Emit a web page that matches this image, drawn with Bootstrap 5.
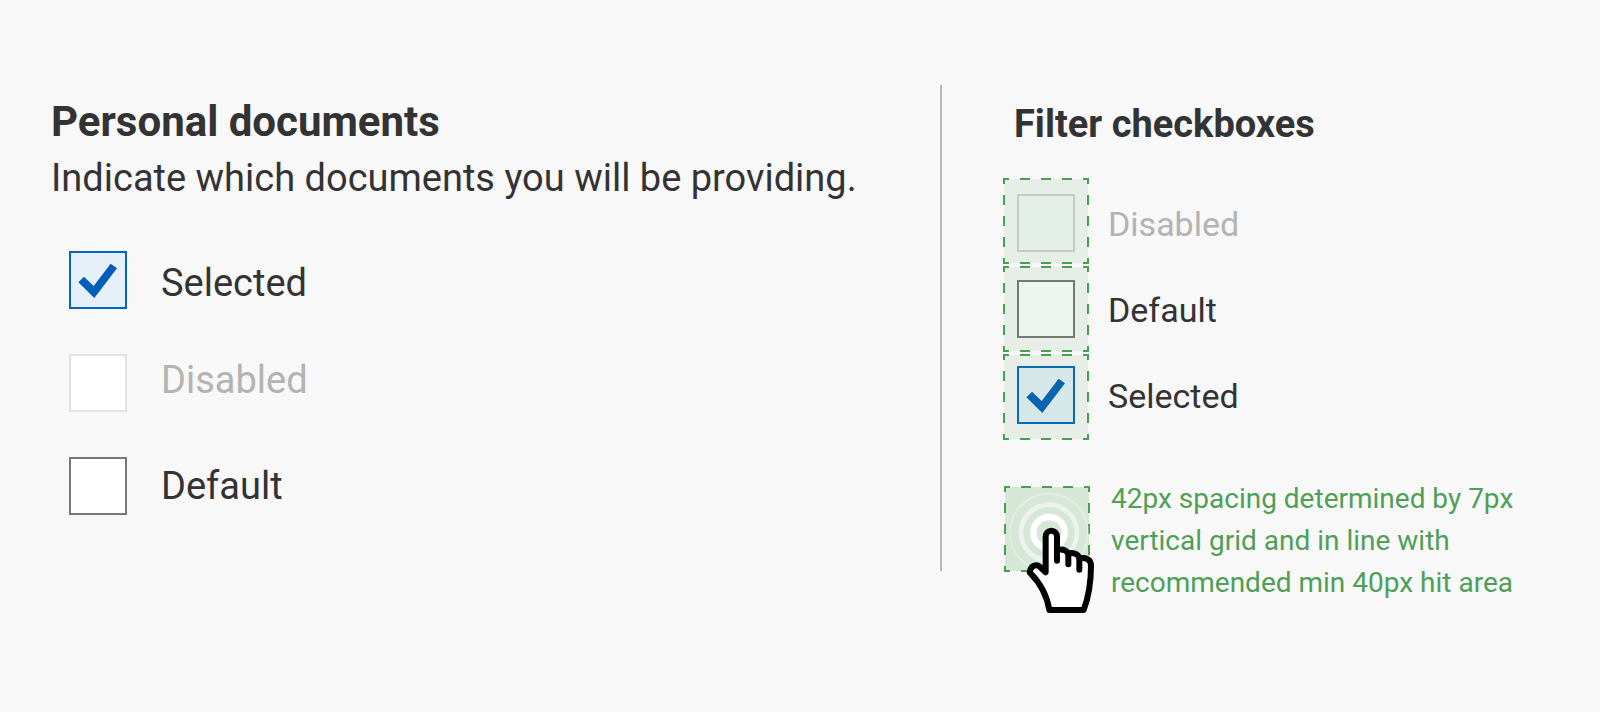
<!DOCTYPE html>
<html lang="en">
<head>
<meta charset="utf-8">
<meta name="viewport" content="width=device-width, initial-scale=1">
<title>Checkboxes</title>
<link href="https://cdn.jsdelivr.net/npm/bootstrap@5.3.0/dist/css/bootstrap.min.css" rel="stylesheet">
<style>
  body { background: #f8f8f8; color: #333; font-family: Roboto, sans-serif; }
  .spec { padding-top: 85px; }
  .documents { flex: 0 0 58.75%; padding: 10px 0 0 51px; }
  .divider { flex: 0 0 2px; background: #b7b7b7; margin-bottom: 49px; }
  .filters { padding: 12px 0 16px 61px; }

  .documents h1 { font-size: 42px; line-height: 54px; }
  .intro { font-size: 38px; line-height: 58px; }
  .filters h2 { font-size: 38px; line-height: 54px; padding-left: 11px; }

  .choice { gap: 34px; }
  .choice label { font-size: 38px; line-height: 52px; }
  .document-list { gap: 45px; padding: 44px 0 0 18px; }

  .choice .form-check-input {
    flex: none; width: 58px; height: 58px; margin: 0;
    border: 2px solid #777; border-radius: 0; background-color: #fff;
    background-size: 58px 58px; background-origin: border-box; opacity: 1;
  }
  .choice .form-check-input:checked {
    border-color: #0067c0; background-color: #e6f0f9;
    background-image: url("data:image/svg+xml,%3Csvg xmlns='http://www.w3.org/2000/svg' viewBox='0 0 174 174'%3E%3Cpath fill='%23005eb8' d='M28 94 45 77 74 105 125 38 144 52 76 141z'/%3E%3C/svg%3E");
  }
  .choice .form-check-input:disabled { border-color: #e2e2e2; }
  .choice .form-check-input:disabled ~ label { color: #b3b3b3; opacity: 1; }

  .filter-list { margin-top: 29px; padding-left: 14px; }
  .filter-list .choice { height: 86px; gap: 33px; }
  .filter-list .choice label { font-size: 34px; line-height: 46px; padding-top: 1px; }
  .filter-list .form-check-input:disabled { border-color: #d1d1d1; background-color: #f7f9fb; }

  .hit-areas { top: -2px; left: 0; gap: 2px; }
  .hit-area { display: block; flex: none; width: 86px; height: 86px; overflow: visible; }

  .hint { margin-top: 40px; padding-left: 1px; gap: 21px; color: #4f9f57; }
  .hint .hit-area { margin-top: 8px; }
  .hint p { font-size: 28px; line-height: 42px; }
</style>
</head>
<body class="min-vh-100">
<svg class="d-none" aria-hidden="true">
  <symbol id="dashed-square" viewBox="0 0 86 86">
    <rect x="1" y="1" width="84" height="84" stroke="#4c9d54" stroke-width="2" stroke-dasharray="10 11" stroke-dashoffset="5"/>
  </symbol>
</svg>

<main class="spec d-flex">
  <section class="documents">
    <h1 class="fw-bold mb-0">Personal documents</h1>
    <p class="intro mb-0">Indicate which documents you will be providing.</p>
    <div class="document-list d-flex flex-column">
      <div class="choice d-flex align-items-end">
        <input class="form-check-input" type="checkbox" id="doc-selected" checked>
        <label for="doc-selected">Selected</label>
      </div>
      <div class="choice d-flex align-items-start">
        <input class="form-check-input" type="checkbox" id="doc-disabled" disabled>
        <label for="doc-disabled">Disabled</label>
      </div>
      <div class="choice d-flex align-items-center">
        <input class="form-check-input" type="checkbox" id="doc-default">
        <label for="doc-default">Default</label>
      </div>
    </div>
  </section>

  <div class="divider"></div>

  <section class="filters flex-grow-1">
    <h2 class="fw-bold mb-0">Filter checkboxes</h2>
    <div class="filter-list position-relative">
      <div class="choice d-flex align-items-center">
        <input class="form-check-input" type="checkbox" id="filter-disabled" disabled>
        <label for="filter-disabled">Disabled</label>
      </div>
      <div class="choice d-flex align-items-center">
        <input class="form-check-input" type="checkbox" id="filter-default">
        <label for="filter-default">Default</label>
      </div>
      <div class="choice d-flex align-items-center">
        <input class="form-check-input" type="checkbox" id="filter-selected" checked>
        <label for="filter-selected">Selected</label>
      </div>
      <!-- touch targets laid over the three boxes -->
      <div class="hit-areas position-absolute d-flex flex-column pe-none" aria-hidden="true">
        <svg class="hit-area" fill="rgba(76,157,84,.1)"><use href="#dashed-square"/></svg>
        <svg class="hit-area" fill="rgba(76,157,84,.1)"><use href="#dashed-square"/></svg>
        <svg class="hit-area" fill="rgba(76,157,84,.1)"><use href="#dashed-square"/></svg>
      </div>
    </div>

    <div class="hint d-flex align-items-start">
      <svg class="hit-area" viewBox="42 33 258 258" aria-hidden="true">
        <rect x="45" y="36" width="252" height="252" fill="#d6e7d8" stroke="#4c9d54" stroke-width="6" stroke-dasharray="30 33" stroke-dashoffset="15"/>
        <g fill="none" stroke="#fff">
          <circle cx="177" cy="173" r="117" stroke-width="6" opacity=".3"/>
          <circle cx="177" cy="173" r="84" stroke-width="14" opacity=".5"/>
          <circle cx="177" cy="173" r="47" stroke-width="19"/>
        </g>
        <g fill="#fff" stroke="#000" stroke-width="18" stroke-linecap="round" stroke-linejoin="round">
          <path d="M167 292V184A17 17 0 0 1 201 184V224C218 222 230 226 234 235C250 232 264 237 269 250C286 247 303 252 303 272C303 320 297 362 281 405H178C171 361 153 326 119 292C122 273 133 269 143 271C153 276 160 287 167 292Z"/>
          <path fill="none" d="M201 222V257M235 236V268M268 250V284"/>
        </g>
      </svg>
      <p class="mb-0">42px spacing determined by 7px<br>vertical grid and in line with<br>recommended min 40px hit area</p>
    </div>
  </section>
</main>
<script src="https://cdn.jsdelivr.net/npm/bootstrap@5.3.0/dist/js/bootstrap.bundle.min.js"></script>
</body>
</html>
